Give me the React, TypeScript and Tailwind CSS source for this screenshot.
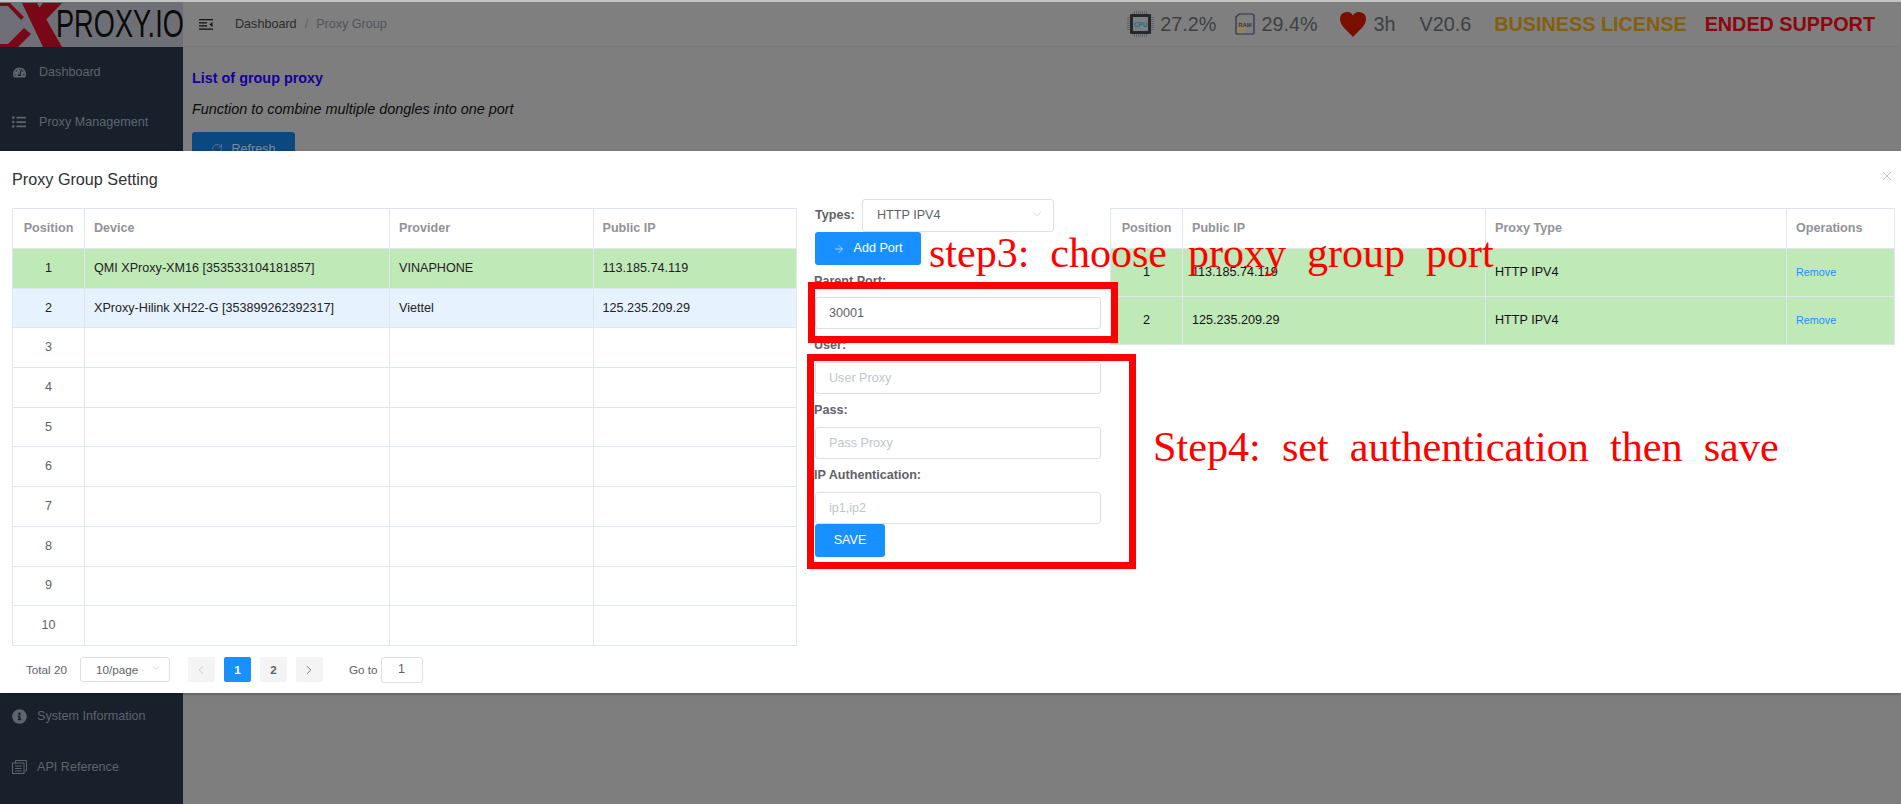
import React from "react";
import { FaTachometerAlt, FaListUl, FaInfoCircle } from "react-icons/fa";
import { ArrowRight, ChevronDown, ChevronLeft, ChevronRight, RefreshCw, X } from "lucide-react";

const leftRows = [
  { pos: 1, device: "QMI XProxy-XM16 [353533104181857]", provider: "VINAPHONE", ip: "113.185.74.119", bg: "bg-[#c0e9b8]", text: "text-[#222222]" },
  { pos: 2, device: "XProxy-Hilink XH22-G [353899262392317]", provider: "Viettel", ip: "125.235.209.29", bg: "bg-[#e6f3fe]", text: "text-[#222222]" },
  ...[3, 4, 5, 6, 7, 8, 9, 10].map((pos) => ({ pos, device: "", provider: "", ip: "", bg: "bg-white", text: "text-[#606266]" })),
];

const rightRows = [
  { pos: 1, ip: "113.185.74.119" },
  { pos: 2, ip: "125.235.209.29" },
];

function CpuIcon() {
  const pins = [0, 1, 2, 3, 4, 5, 6];
  return (
    <svg width="27" height="26" viewBox="0 0 27 26" fill="none">
      {pins.map((i) => (
        <g key={i} stroke="#5a5c60" strokeWidth="0.8">
          <path d={`M${7.5 + i * 2} 0v3M${7.5 + i * 2} 23v3`} />
          <path d={`M0 ${6.5 + i * 2}h3M24 ${6.5 + i * 2}h3`} />
        </g>
      ))}
      <rect x="3" y="3" width="21" height="20" rx="1" fill="#26292b" />
      <rect x="6" y="6" width="15" height="14" fill="#7d7f82" />
      <text x="13.5" y="15.5" textAnchor="middle" fontSize="6.5" fontWeight="700" fontFamily="Liberation Sans" fill="#1f6f8c">CPU</text>
    </svg>
  );
}

function RamIcon() {
  return (
    <svg width="20" height="22" viewBox="0 0 20 22" fill="none">
      <circle cx="6" cy="16" r="5" fill="#8c8662" />
      <path d="M1 4l3-3h13a2 2 0 0 1 2 2v17a1 1 0 0 1-1 1H2a1 1 0 0 1-1-1z" stroke="#2f3048" strokeWidth="1.2" />
      <text x="10" y="13.5" textAnchor="middle" fontSize="6" fontWeight="700" fontFamily="Liberation Sans" fill="#3b3b3b">RAM</text>
    </svg>
  );
}

function Logo() {
  return (
    <div className="w-[183px] h-[45px] shrink-0 bg-[#6f7077] relative overflow-hidden">
      <svg className="absolute left-0 top-0" width="63" height="45" viewBox="0 0 63 45">
        <path d="M22 1h15l25 44H43z" fill="#7a0717" />
        <path d="M43 1h19L40 24 31 16z" fill="#7a0717" />
        <path d="M24 26l7 6-13 13H0v-3h8z" fill="#7a0717" />
        <path d="M0 1h10l14 14-3 3L8 4H0z" fill="#7a0717" />
      </svg>
      <span className="absolute left-[56px] top-[1px] origin-left scale-x-[0.715] text-[38px] leading-[43px] font-['Liberation_Sans'] text-[#0b0b0b] whitespace-nowrap">PROXY.IO</span>
    </div>
  );
}

function SideItem({ icon, label, tight }: { icon: React.ReactNode; label: string; tight?: boolean }) {
  return (
    <div className={`h-[50px] flex items-center pl-[11px] text-[12.6px] text-[#5f656c] ${tight ? "" : ""}`}>
      <span className={`w-[16px] flex justify-center ${tight ? "mr-[10px]" : "mr-[12px]"}`}>{icon}</span>
      {label}
    </div>
  );
}

function Field({ placeholder, value }: { placeholder: string; value?: string }) {
  return (
    <div className="h-[32px] w-[286px] border border-[#dcdfe6] rounded-[3px] bg-white flex items-center px-[13px] text-[12.6px]">
      {value ? <span className="text-[#606266]">{value}</span> : <span className="text-[#c0c4cc]">{placeholder}</span>}
    </div>
  );
}

function Label({ children, first }: { children: React.ReactNode; first?: boolean }) {
  return <div className={`${first ? "h-[32px]" : "h-[33px]"} -ml-px flex items-center text-[12.6px] font-bold text-[#606266]`}>{children}</div>;
}

function PageBtn({ children, active, faded }: { children: React.ReactNode; active?: boolean; faded?: boolean }) {
  return (
    <div className={`w-[27px] h-[25px] rounded-[2px] flex items-center justify-center text-[11.7px] font-bold ${active ? "bg-[#1890ff] text-white" : faded ? "bg-[#f4f4f5] text-[#c0c4cc]" : "bg-[#f4f4f5] text-[#606266]"}`}>
      {children}
    </div>
  );
}

export default function App() {
  return (
    <div className="relative w-[1901px] h-[804px] overflow-hidden bg-[#7e7e7e] font-['Liberation_Sans',Arial,sans-serif]">
      <div className="h-[2px] bg-[#c4c4c4]" />
      <div className="flex h-[802px]">
        <aside className="w-[183px] shrink-0 bg-[#18202b] flex flex-col">
          <Logo />
          <SideItem icon={<FaTachometerAlt size={13} />} label="Dashboard" />
          <SideItem icon={<FaListUl size={14} />} label="Proxy Management" />
          <div className="h-[544px]" />
          <SideItem tight icon={<FaInfoCircle size={15} />} label="System Information" />
          <div className="mt-[1px]">
            <SideItem
              tight
              icon={
                <svg width="15" height="14" viewBox="0 0 15 14" fill="none" stroke="#5f656c" strokeWidth="1">
                  <path d="M3.5 3V.5h11v10.5h-2" />
                  <rect x="0.5" y="3" width="11.5" height="10.5" />
                  <path d="M3 6h6.500M3 8.500h6.500M3 11h6.500" />
                </svg>
              }
              label="API Reference"
            />
          </div>
        </aside>
        <main className="flex-1 flex flex-col">
          <header className="h-[45px] shrink-0 border-b border-[#777777] bg-[#7f7f7f] flex items-center">
            <svg className="ml-[16px]" width="14" height="11" viewBox="0 0 14 11" fill="#111">
              <path d="M0 0h14v1.200H0zM0 3.200h8v1.200H0zM0 6.300h8v1.200H0zM0 9.500h14v1.200H0zM13.500 3v5l-3-2.500z" />
            </svg>
            <div className="ml-[22px] flex items-center text-[12.6px]">
              <span className="text-[#2b2b2b]">Dashboard</span>
              <span className="mx-[8px] text-[#5f6166]">/</span>
              <span className="text-[#50545a]">Proxy Group</span>
            </div>
            <div className="ml-auto mr-[26px] flex items-center text-[19.8px] text-[#3e3f42]">
              <CpuIcon />
              <span className="ml-[6px] pt-[1px]">27.2%</span>
              <span className="ml-[19px]"><RamIcon /></span>
              <span className="ml-[6px] pt-[1px]">29.4%</span>
              <svg className="ml-[22px]" width="26" height="25" viewBox="0 0 26 25">
                <path d="M13 25C8 19 0 14 0 7a7 7 0 0 1 13-3.500A7 7 0 0 1 26 7c0 7-8 12-13 18z" fill="#7a0f00" />
              </svg>
              <span className="ml-[8px] pt-[1px]">3h</span>
              <span className="ml-[24px] pt-[1px]">V20.6</span>
              <span className="ml-[23px] pt-[1px] font-bold text-[#83600f]">BUSINESS LICENSE</span>
              <span className="ml-[18px] pt-[1px] font-bold text-[#8c0610]">ENDED SUPPORT</span>
            </div>
          </header>
          <div className="pl-[9px] pt-[22px]">
            <div className="text-[14.4px] font-bold leading-[18px] text-[#14009f]">List of group proxy</div>
            <div className="mt-[13px] text-[14.4px] italic leading-[18px] text-[#0b0b0b]">Function to combine multiple dongles into one port</div>
            <div className="mt-[14px] w-[103px] h-[34px] rounded-[3px] bg-[#0c4880] flex items-center justify-center text-[12.6px] text-[#7e8b99]">
              <RefreshCw size={12} strokeWidth={1.2} className="mr-[8px]" />
              Refresh
            </div>
          </div>
        </main>
      </div>

      {/* modal */}
      <div className="absolute left-0 top-[151px] w-full h-[542px] bg-white shadow-[0_1px_3px_rgba(0,0,0,0.3)]">
        <div className="h-[48px] pl-[12px] pt-[18px] leading-[20px] text-[16.2px] text-[#303133]">Proxy Group Setting</div>
        <X size={14} strokeWidth={1} className="absolute right-[7px] top-[18px] text-[#909399]" />
        <div className="flex pl-[12px]">
          <div className="w-[785px] mt-[9px] shrink-0">
            <table className="w-[785px] table-fixed border-collapse text-[12.6px]">
              <colgroup>
                <col className="w-[72px]" />
                <col className="w-[305px]" />
                <col className="w-[204px]" />
                <col />
              </colgroup>
              <thead>
                <tr className="h-[40px] text-[#909399] font-bold">
                  <th className="border border-[#dfe6ec] text-center font-bold">Position</th>
                  <th className="border border-[#dfe6ec] text-left pl-[9px] font-bold">Device</th>
                  <th className="border border-[#dfe6ec] text-left pl-[9px] font-bold">Provider</th>
                  <th className="border border-[#dfe6ec] text-left pl-[8.500px] font-bold">Public IP</th>
                </tr>
              </thead>
              <tbody>
                {leftRows.map((r) => (
                  <tr key={r.pos} className={`h-[39.7px] ${r.bg}`}>
                    <td className={`border border-[#dfe6ec] text-center ${r.text}`}>{r.pos}</td>
                    <td className={`border border-[#dfe6ec] pl-[9px] ${r.text}`}>{r.device}</td>
                    <td className={`border border-[#dfe6ec] pl-[9px] ${r.text}`}>{r.provider}</td>
                    <td className={`border border-[#dfe6ec] pl-[8.500px] ${r.text}`}>{r.ip}</td>
                  </tr>
                ))}
              </tbody>
            </table>
            <div className="mt-[11px] flex items-center text-[11.7px] text-[#606266]">
              <span className="ml-[14px]">Total 20</span>
              <div className="ml-[13px] w-[90px] h-[25px] border border-[#dcdfe6] rounded-[3px] flex items-center pl-[15px] relative">
                10/page
                <ChevronDown size={12} strokeWidth={1} className="absolute right-[7px] top-[4px] text-[#b4b8bf]" />
              </div>
              <div className="ml-[18px] flex gap-[9px]">
                <PageBtn faded><ChevronLeft size={14} strokeWidth={1.5} /></PageBtn>
                <PageBtn active>1</PageBtn>
                <PageBtn>2</PageBtn>
                <PageBtn><ChevronRight size={14} strokeWidth={1.5} /></PageBtn>
              </div>
              <span className="ml-[26px]">Go to</span>
              <div className="ml-[3px] w-[42px] h-[26px] border border-[#dcdfe6] rounded-[3px] flex items-center justify-center text-[12.6px]">1</div>
            </div>
          </div>
          <div className="w-[286px] ml-[18px] shrink-0">
            <div className="h-[33px] flex items-center">
              <span className="w-[47px] text-[12.6px] font-bold text-[#606266]">Types:</span>
              <div className="w-[192px] h-[33px] border border-[#dcdfe6] rounded-[3px] flex items-center pl-[14px] relative text-[12.6px] text-[#606266]">
                HTTP IPV4
                <ChevronDown size={14} strokeWidth={1} className="absolute right-[9px] top-[7px] text-[#b4b8bf]" />
              </div>
            </div>
            <div className="h-[33px] w-[106px] rounded-[3px] bg-[#1890ff] flex items-center justify-center text-[12.6px] text-white">
              <ArrowRight size={12} strokeWidth={1.2} className="mr-[8px]" />
              Add Port
            </div>
            <Label first>Parent Port:</Label>
            <Field placeholder="Parent Port" value="30001" />
            <Label>User:</Label>
            <Field placeholder="User Proxy" />
            <Label>Pass:</Label>
            <Field placeholder="Pass Proxy" />
            <Label>IP Authentication:</Label>
            <Field placeholder="ip1,ip2" />
            <div className="h-[33px] w-[70px] rounded-[3px] bg-[#1890ff] flex items-center justify-center text-[12.6px] text-white">SAVE</div>
          </div>
          <div className="ml-[9px] w-[785px] mt-[9px] shrink-0">
            <table className="w-[785px] table-fixed border-collapse text-[12.6px]">
              <colgroup>
                <col className="w-[72px]" />
                <col className="w-[303px]" />
                <col className="w-[301px]" />
                <col />
              </colgroup>
              <thead>
                <tr className="h-[40px] text-[#909399]">
                  <th className="border border-[#dfe6ec] text-center font-bold">Position</th>
                  <th className="border border-[#dfe6ec] text-left pl-[9px] font-bold">Public IP</th>
                  <th className="border border-[#dfe6ec] text-left pl-[9px] font-bold">Proxy Type</th>
                  <th className="border border-[#dfe6ec] text-left pl-[9px] font-bold">Operations</th>
                </tr>
              </thead>
              <tbody>
                {rightRows.map((r) => (
                  <tr key={r.pos} className="h-[48px] bg-[#c0e9b8] text-[#111]">
                    <td className="border border-[#dfe6ec] text-center">{r.pos}</td>
                    <td className="border border-[#dfe6ec] pl-[9px]">{r.ip}</td>
                    <td className="border border-[#dfe6ec] pl-[9px]">HTTP IPV4</td>
                    <td className="border border-[#dfe6ec] pl-[9px] text-[10.8px] text-[#1890ff]">Remove</td>
                  </tr>
                ))}
              </tbody>
            </table>
          </div>
        </div>
      </div>

      {/* hand-drawn annotations over the screenshot */}
      <div className="absolute left-[808px] top-[282px] w-[310px] h-[61px] border-[7px] border-[#ff0000]" />
      <div className="absolute left-[807px] top-[354px] w-[329px] h-[215px] border-[7px] border-[#ff0000]" />
      <div className="absolute left-[929px] top-[229px] text-[42px] leading-[48px] text-[#ff0000] whitespace-pre font-['Liberation_Serif',serif]">step3:  choose  proxy  group  port</div>
      <div className="absolute left-[1153px] top-[423px] text-[42.2px] leading-[48px] text-[#ff0000] whitespace-pre font-['Liberation_Serif',serif]">Step4:  set  authentication  then  save</div>
    </div>
  );
}
